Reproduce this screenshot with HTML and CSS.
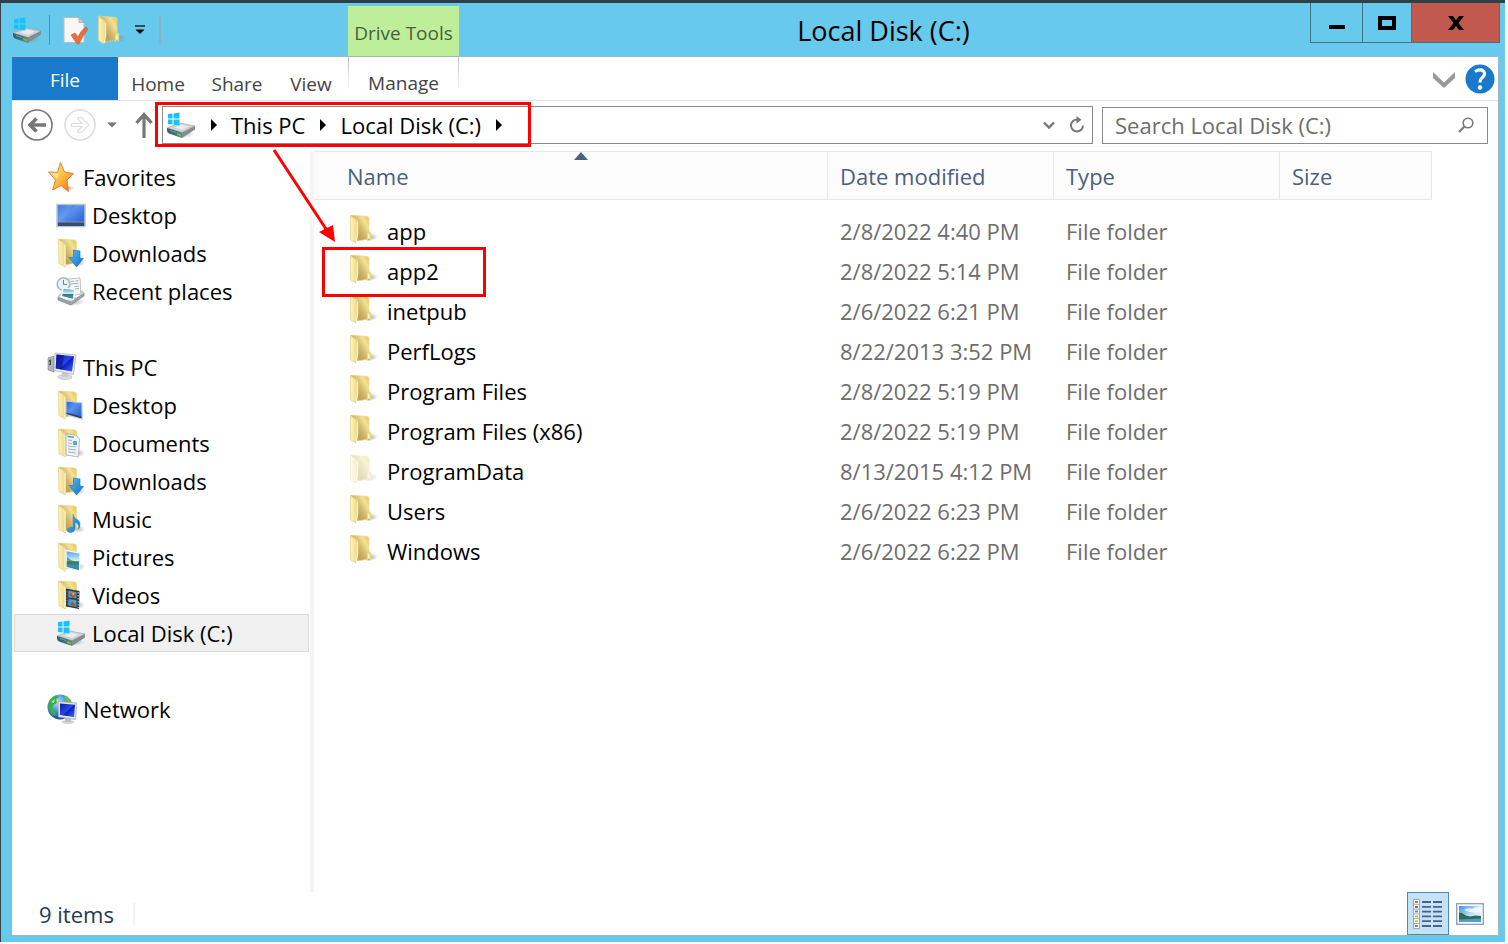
FILE: index.html
```html
<!DOCTYPE html>
<html lang="en">
<head>
<meta charset="utf-8">
<meta name="viewport" content="width=device-width, initial-scale=1">
<title>Local Disk (C:)</title>
<link rel="stylesheet" href="styles.css">
</head>
<body>
<svg class="defs" width="0" height="0" aria-hidden="true">
  <defs>
    <linearGradient id="gBack" gradientUnits="userSpaceOnUse" x1="8" y1="18" x2="21" y2="10"><stop offset="0" stop-color="#bfa35a"/><stop offset=".35" stop-color="#d3b96f"/><stop offset=".8" stop-color="#f3e296"/><stop offset="1" stop-color="#ecd26c"/></linearGradient>
    <linearGradient id="gFront" x1="0" y1="0" x2="1" y2="0"><stop offset="0" stop-color="#fdf3bd"/><stop offset="1" stop-color="#efd888"/></linearGradient>
    <linearGradient id="gStar" x1="0" y1="0" x2="1" y2="1"><stop offset="0" stop-color="#fff08a"/><stop offset=".55" stop-color="#fdb83c"/><stop offset="1" stop-color="#e8641c"/></linearGradient>
    <linearGradient id="gBlue" x1="0" y1="0" x2="1" y2="1"><stop offset="0" stop-color="#2a5fd0"/><stop offset=".4" stop-color="#5b92ee"/><stop offset="1" stop-color="#1d55cf"/></linearGradient>
    <linearGradient id="gScreen" x1="0" y1="0" x2="1" y2="1"><stop offset="0" stop-color="#0a18a8"/><stop offset=".5" stop-color="#2b49e4"/><stop offset=".55" stop-color="#0a1fc0"/><stop offset="1" stop-color="#3d6bf0"/></linearGradient>
    <linearGradient id="gArrow" x1="0" y1="0" x2="1" y2="1"><stop offset="0" stop-color="#55bdf2"/><stop offset="1" stop-color="#1371c4"/></linearGradient>
    <linearGradient id="gDisk" x1="0" y1="0" x2="1" y2="0"><stop offset="0" stop-color="#4d5560"/><stop offset=".5" stop-color="#3f6f78"/><stop offset="1" stop-color="#7a8288"/></linearGradient>
    <linearGradient id="gPhoto" x1="0" y1="0" x2="0" y2="1"><stop offset="0" stop-color="#4f9fe0"/><stop offset=".5" stop-color="#d4eefa"/><stop offset=".55" stop-color="#3f7d52"/><stop offset=".75" stop-color="#3c8fb4"/><stop offset="1" stop-color="#2d73b8"/></linearGradient>
    <linearGradient id="gSky" x1="0" y1="0" x2="1" y2="1"><stop offset="0" stop-color="#3c94e2"/><stop offset=".6" stop-color="#cfeafa"/><stop offset="1" stop-color="#eef8fd"/></linearGradient>
    <radialGradient id="gGlobe" cx=".4" cy=".3" r=".75"><stop offset="0" stop-color="#b8e4fb"/><stop offset=".5" stop-color="#3d8fda"/><stop offset="1" stop-color="#0f3f96"/></radialGradient>
    <radialGradient id="gShade"><stop offset="0" stop-color="#888" stop-opacity=".6"/><stop offset="1" stop-color="#888" stop-opacity="0"/></radialGradient>
  </defs>
  <symbol id="folder" viewBox="0 0 30 30">
    <ellipse cx="22" cy="23" rx="7" ry="4" fill="url(#gShade)"/>
    <path d="M2 1 L19 2.500 Q20 3 20 5 V25 L8 27Z" fill="url(#gBack)" stroke="#e9d58e" stroke-width=".6"/>
    <path d="M18 19.500 Q19 17.500 21 18 Q22 18.500 22 20 V26 L18 26.500Z" fill="#f2df84" stroke="#dfc663" stroke-width=".5"/>
    <path d="M19.800 20.500 V25" stroke="#fffbe0" stroke-width="1.200"/><path d="M19.800 24.500 V26" stroke="#7fb4cf" stroke-width="1.200"/>
    <path d="M1.500 1.500 L8 6 Q8.800 7 8.800 9 V20 L7 29 L2 26 Q1.500 25 1.500 24Z" fill="url(#gFront)" stroke="#e3cd80" stroke-width=".7"/>
    <path d="M8.600 8 V20 L7.300 28" stroke="#fffbe2" fill="none"/>
  </symbol>
  <symbol id="lib" viewBox="0 0 30 30">
    <ellipse cx="22" cy="25" rx="7" ry="4" fill="url(#gShade)"/>
    <path d="M3 1 L19 2 Q20.500 2.500 20.500 4 V25 L9 27Z" fill="url(#gBack)" stroke="#e9d58e" stroke-width=".6"/>
    <path d="M2.500 1.500 L8.500 5 Q9.500 6 9.500 8 V29 L3 25.500Z" fill="url(#gFront)" stroke="#e3cd80" stroke-width=".7"/>
    <path d="M9 7 V28" stroke="#fff8d6"/>
  </symbol>
  <symbol id="disk" viewBox="0 0 30 30">
    <ellipse cx="17" cy="24" rx="12" ry="4" fill="url(#gShade)"/>
    <path d="M1 18 L14 13 L29 16 L16 22.500Z" fill="#cfd2d5" stroke="#9da2a6" stroke-width=".6"/>
    <path d="M8 17.500 L15 14.500 L23 16.500 L16 20Z" fill="#e8eaec"/>
    <path d="M1 18 L16 22.500 V28 L3 23.500 Q1 22.500 1 20.500Z" fill="url(#gDisk)"/>
    <path d="M16 22.500 L29 16 V19.500 L16 28Z" fill="#858c91"/>
    <path d="M11 23 L15 24.300 V26.500 L11 25.100Z" fill="#5ac93c"/>
    <path d="M4 20.500 L10 22.500" stroke="#37b0d2"/>
    <path d="M2 4 L6.500 3.500 V8.500 H2Z M7.500 3.400 L13.500 2.500 V8.500 H7.500Z M2 9.500 H6.500 V14.500 L2 14Z M7.500 9.500 H13.500 V15.500 L7.500 14.700Z" fill="#19c3fa"/>
  </symbol>
  <symbol id="star" viewBox="0 0 30 30">
    <ellipse cx="21" cy="26" rx="7" ry="3" fill="url(#gShade)"/>
    <path d="M13.500 .5 L17.500 10 L26.500 11.500 L20 18 L21.500 29.500 L14 23.500 L5.500 28 L8.500 18 L1.500 10 L10.500 10.300Z" fill="url(#gStar)" stroke="#e2792c" stroke-width=".9" stroke-linejoin="round"/>
    <path d="M13.300 4 L11.500 11.500 L5 11.500 L10.500 17Z" fill="#fff7b5" opacity=".7"/>
  </symbol>
  <symbol id="desktop" viewBox="0 0 30 30">
    <rect x="1" y="4.500" width="28" height="22" fill="url(#gBlue)" stroke="#b9c4d2" stroke-width="1.500"/>
    <path d="M2 22 H28 V26 H2Z" fill="#3b4b68"/><path d="M2 22 H28" stroke="#8fa5c9" stroke-width=".8"/>
    <path d="M2 5.500 H16 L6 21.500 H2Z" fill="#7fa9f2" opacity=".35"/>
  </symbol>
  <symbol id="downloads" viewBox="0 0 30 30"><use href="#lib"/>
    <path d="M17.500 12 L24 13 V20 L27.500 20.500 L20.500 29 L13 19.500 L17.500 19.500Z" fill="url(#gArrow)" stroke="#1f7cc4" stroke-width=".7"/>
  </symbol>
  <symbol id="recent" viewBox="0 0 30 30">
    <ellipse cx="17" cy="26" rx="12" ry="4" fill="url(#gShade)"/>
    <path d="M12 3 L24 2 L25 18 L13 20Z" fill="#f7f9fa" stroke="#a9b3ba" stroke-width=".8"/>
    <path d="M14.500 5.500 L18 5.200 M19.500 5 L22.500 4.800 M14.500 8 L22.500 7.200 M18.500 10.500 L23 10 M19 13 L23 12.500" stroke="#8ba3b4" stroke-width=".9"/>
    <circle cx="7.500" cy="8" r="6.300" fill="#e7f0f4" stroke="#a9b7c0" stroke-width="1.600"/>
    <path d="M7.500 4 V8.500 H11" stroke="#6d8290" fill="none"/>
    <path d="M2 21 L15 26 L28 17 V20 L15 29 L2 24Z" fill="#9da4a9" stroke="#747c83" stroke-width=".6"/>
    <path d="M2 21 L7 16 M15 26 L20 21 M28 17 L24 15" stroke="#b9bfc4" stroke-width="1.500"/>
    <path d="M7 12 L18.500 13.500 L17.500 23.500 L5.500 20.500Z" fill="url(#gPhoto)" stroke="#fff" stroke-width="1.200"/>
  </symbol>
  <symbol id="pc" viewBox="0 0 30 30">
    <path d="M1 6 L7 4 V20 L1 18Z" fill="#aeb4b9" stroke="#7d858b" stroke-width=".6"/><path d="M2 8 L4 7.500 V13 L2 13Z" fill="#4a5157"/><path d="M2.300 10 V12" stroke="#62d848"/>
    <ellipse cx="18" cy="25" rx="7" ry="2.600" fill="#d9dcdf" stroke="#adb2b6" stroke-width=".6"/>
    <path d="M15 20 L21 21 V25 H15Z" fill="#c4c9cd"/>
    <path d="M8 1 L29 3 L26.500 22.500 L7 18.500Z" fill="#e6e9ec" stroke="#a9b0b6" stroke-width=".7"/>
    <path d="M9.500 2.500 L27 4.200 L25 19.500 L8.700 16.500Z" fill="url(#gScreen)"/>
    <path d="M9.500 2.500 L17 3.200 L15 17.600 L8.700 16.500Z" fill="#061088" opacity=".55"/>
  </symbol>
  <symbol id="deskfolder" viewBox="0 0 30 30"><use href="#lib"/>
    <path d="M10 11 L26 13 V29 L10 24.500Z" fill="url(#gBlue)" stroke="#c2ccd8" stroke-width="1.200"/><path d="M10.500 22.500 L25.500 26.500 V28.300 L10.500 24Z" fill="#34435c"/>
  </symbol>
  <symbol id="documents" viewBox="0 0 30 30"><use href="#lib"/>
    <path d="M10 6 L20 7 L23.500 11 L22.500 29 L10 27Z" fill="#f0f2f4" stroke="#a4acb4" stroke-width=".8"/>
    <path d="M11.500 8.500 L18 9.200" stroke="#3aa58c" stroke-width="1.300"/><path d="M12 12 L16 12.500 M12 15 L16 15.500 M12 18 L20 19 M12 21 L20 22 M12 24 L20 25" stroke="#a9b3c2"/><rect x="17" y="13" width="4" height="4" fill="#5fa6d6"/>
  </symbol>
  <symbol id="music" viewBox="0 0 30 30"><use href="#lib"/>
    <path d="M17 10 Q18 14 22 16 Q26 20 22.500 25 Q23.500 20 19 18 V25 Q18 29 13.500 28.500 Q9.500 27.500 12 24.500 Q14 22.500 17 23.500Z" fill="url(#gArrow)" stroke="#3388bf" stroke-width=".5"/>
  </symbol>
  <symbol id="pictures" viewBox="0 0 30 30"><use href="#lib"/>
    <path d="M10 8.500 L24 11 L23.500 29 L10 25.500Z" fill="url(#gPhoto)" stroke="#edf3f6" stroke-width="1.300"/>
    <path d="M11 15 L15 18 L20 20 L23 23 L11 22Z" fill="#3c7c5d" opacity=".7"/>
  </symbol>
  <symbol id="videos" viewBox="0 0 30 30"><use href="#lib"/>
    <path d="M10 8.500 L23.500 11 L23 29 L10 26.500Z" fill="#34373d"/>
    <path d="M12.300 10.500 L20.500 12 V18.500 L12.300 17.500Z M12.300 19 L20.500 20 V27 L12.300 25.500Z" fill="#489bd0"/>
    <path d="M13 15 Q16 10 20 15 L17 18 M14 25 Q16 19 20 26Z" fill="#b34b26"/><circle cx="17" cy="14" r="1.500" fill="#dfa33d"/>
    <path d="M11 11 V26" stroke="#7c8288" stroke-dasharray="1.500 1.500"/><path d="M22.200 12 V28" stroke="#d6d9db" stroke-dasharray="1.500 1.500"/>
  </symbol>
  <symbol id="network" viewBox="0 0 30 30">
    <circle cx="13" cy="13" r="12.500" fill="url(#gGlobe)"/>
    <path d="M2 8 Q4 3 9 1.500 L12 3 L9 5 L10 9 L6 11 L5 14 L9 18 L8 22 Q2 19 1 13Z" fill="#3dae3e"/><path d="M18 2 Q23 4 25 9 L20 8 L17 6Z" fill="#66bd52"/><path d="M4 8 L8 5 L7 9Z" fill="#b9e889"/>
    <ellipse cx="21" cy="28" rx="6.500" ry="2" fill="#d3d6d9"/><path d="M18 23 H24 V28 H18Z" fill="#b9bec3"/>
    <path d="M11 7.500 L30 9 L28.500 25.500 L11.500 23Z" fill="#dee2e6" stroke="#a0a7ae" stroke-width=".7"/><path d="M13 9.500 L28 10.700 L27 23 L13 21Z" fill="url(#gScreen)"/>
  </symbol>
  <symbol id="properties" viewBox="0 0 30 30">
    <path d="M4 2.500 H19 L24 7.500 V27.500 H4Z" fill="#f8f7f6" stroke="#b9bdc0"/><path d="M19 2.500 V7.500 H24Z" fill="#c9d0d5" stroke="#8e989f" stroke-width=".6"/>
    <path d="M11 20 L15 18 L18 22 Q21 15 26 12 L28 14 Q23 20 19 29 L17 29Z" fill="#e4713f" stroke="#c65b31" stroke-width=".6"/>
  </symbol>
</svg>

<div class="window">
  <header class="titlebar">
    <div class="quick">
      <svg class="icon"><use href="#disk"/></svg>
      <span class="sep dark"></span>
      <button class="plain properties" aria-label="Properties"><svg class="icon"><use href="#properties"/></svg></button>
      <button class="plain" aria-label="New folder"><svg class="icon"><use href="#folder"/></svg></button>
      <button class="plain customize" aria-label="Customize Quick Access Toolbar"><svg width="12" height="10" viewBox="0 0 12 10"><path d="M1 1 H11" stroke="#222" stroke-width="1.500"/><path d="M1.500 4.500 H10.500 L6 9Z" fill="#000"/></svg></button>
      <span class="sep"></span>
    </div>
    <div class="context">Drive Tools</div>
    <h1 class="title">Local Disk (C:)</h1>
    <div class="controls">
      <button class="ctl" aria-label="Minimize"><svg width="16" height="16"><path d="M0 12 H16" stroke="#000" stroke-width="4"/></svg></button>
      <button class="ctl max" aria-label="Maximize"><svg width="18" height="14"><rect x="2" y="2" width="14" height="10" fill="none" stroke="#000" stroke-width="4"/></svg></button>
      <button class="ctl close" aria-label="Close"><svg width="16" height="14" viewBox="0 0 16 14"><path d="M0 0 H5 L8 4 L11 0 H16 L10.500 7 L16 14 H11 L8 10 L5 14 H0 L5.500 7Z"/></svg></button>
    </div>
  </header>

  <main class="client">
    <nav class="ribbon" aria-label="Ribbon">
      <button class="tab file">File</button>
      <button class="tab home">Home</button>
      <button class="tab share">Share</button>
      <button class="tab view">View</button>
      <button class="tab manage">Manage</button>
      <button class="plain expand" aria-label="Expand the Ribbon"><svg width="22" height="18" viewBox="0 0 22 18"><path d="M0 1 L11 11.500 L22 1 V7 L11 17 L0 7Z" fill="#999"/></svg></button>
      <button class="plain help" aria-label="Help"><svg width="30" height="30" viewBox="0 0 30 30"><circle cx="15" cy="15" r="14.500" fill="#1979ca"/><path d="M10 7.500 Q15 4.500 18.500 7 Q21 10 18 13 Q15 15 15 18.500" fill="none" stroke="#fff" stroke-width="3"/><circle cx="15" cy="23.500" r="2.200" fill="#fff"/></svg></button>
    </nav>

    <div class="address-row">
      <button class="plain" aria-label="Back"><svg width="32" height="32" viewBox="0 0 32 32"><circle cx="16" cy="16" r="15" fill="none" stroke="#777" stroke-width="1.600"/><path d="M25 16 H10 M15.500 9.500 L9 16 L15.500 22.500" fill="none" stroke="#777" stroke-width="3.600"/></svg></button>
      <button class="plain forward" aria-label="Forward"><svg width="32" height="32" viewBox="0 0 32 32"><circle cx="16" cy="16" r="15" fill="none" stroke="#ddd" stroke-width="1.600"/><path d="M7.500 14.500 H18 L14 10 V8.500 H17.500 L25 16 L17.500 23.500 H14 V22 L18 17.500 H7.500Z" fill="none" stroke="#ddd" stroke-width="1.200"/></svg></button>
      <button class="plain recent" aria-label="Recent locations"><svg width="10" height="6"><path d="M0 .5 H10 L5 5.500Z" fill="#777"/></svg></button>
      <button class="plain up" aria-label="Up"><svg width="18" height="26" viewBox="0 0 18 26"><path d="M9 26 V3 M1.500 11 L9 2.500 L16.500 11" fill="none" stroke="#777" stroke-width="3.200"/></svg></button>
      <div class="address">
        <svg class="icon"><use href="#disk"/></svg>
        <svg width="6" height="12"><path d="M0 0 L6 6 L0 12Z"/></svg>
        <a class="crumb" href="#">This PC</a>
        <svg width="6" height="12"><path d="M0 0 L6 6 L0 12Z"/></svg>
        <a class="crumb" href="#">Local Disk (C:)</a>
        <svg width="6" height="12"><path d="M0 0 L6 6 L0 12Z"/></svg>
        <button class="plain history" aria-label="Previous locations"><svg width="12" height="9" viewBox="0 0 12 9"><path d="M1 1.500 L6 6.500 L11 1.500" fill="none" stroke="#777" stroke-width="2.400"/></svg></button>
        <button class="plain refresh" aria-label="Refresh"><svg width="16" height="18" viewBox="0 0 16 18"><path d="M8 3.500 A6 6 0 1 0 14 9.500" fill="none" stroke="#777" stroke-width="2"/><path d="M7.500 0 L12.500 3.800 L7.500 7.500Z" fill="#777"/></svg></button>
      </div>
      <div class="search">
        <input type="text" aria-label="Search Local Disk (C:)" placeholder="Search Local Disk (C:)">
        <svg width="16" height="16" viewBox="0 0 16 16"><circle cx="10" cy="6" r="4.800" fill="none" stroke="#777" stroke-width="1.600"/><path d="M6.500 9.500 L1 15" stroke="#777" stroke-width="2.200"/></svg>
      </div>
    </div>

    <div class="panes">
      <nav class="tree" aria-label="Navigation pane">
        <a class="node root" href="#"><svg class="icon"><use href="#star"/></svg>Favorites</a>
        <a class="node" href="#"><svg class="icon"><use href="#desktop"/></svg>Desktop</a>
        <a class="node" href="#"><svg class="icon"><use href="#downloads"/></svg>Downloads</a>
        <a class="node" href="#"><svg class="icon"><use href="#recent"/></svg>Recent places</a>
        <a class="node root group" href="#"><svg class="icon"><use href="#pc"/></svg>This PC</a>
        <a class="node" href="#"><svg class="icon"><use href="#deskfolder"/></svg>Desktop</a>
        <a class="node" href="#"><svg class="icon"><use href="#documents"/></svg>Documents</a>
        <a class="node" href="#"><svg class="icon"><use href="#downloads"/></svg>Downloads</a>
        <a class="node" href="#"><svg class="icon"><use href="#music"/></svg>Music</a>
        <a class="node" href="#"><svg class="icon"><use href="#pictures"/></svg>Pictures</a>
        <a class="node" href="#"><svg class="icon"><use href="#videos"/></svg>Videos</a>
        <a class="node selected" href="#"><svg class="icon"><use href="#disk"/></svg>Local Disk (C:)</a>
        <a class="node root group" href="#"><svg class="icon"><use href="#network"/></svg>Network</a>
      </nav>
      <section class="list">
        <table class="files">
          <colgroup><col class="c-name"><col class="c-date"><col class="c-type"><col class="c-size"></colgroup>
          <thead><tr><th class="sorted" aria-sort="ascending">Name<svg class="sort" width="14" height="8"><path d="M0 8 L7 0 L14 8Z" fill="#4c607a"/></svg></th><th>Date modified</th><th>Type</th><th>Size</th></tr></thead>
          <tbody>
            <tr><td><span class="name"><svg class="icon"><use href="#folder"/></svg>app</span></td><td>2/8/2022 4:40 PM</td><td>File folder</td><td></td></tr>
            <tr><td><span class="name"><svg class="icon"><use href="#folder"/></svg>app2</span></td><td>2/8/2022 5:14 PM</td><td>File folder</td><td></td></tr>
            <tr><td><span class="name"><svg class="icon"><use href="#folder"/></svg>inetpub</span></td><td>2/6/2022 6:21 PM</td><td>File folder</td><td></td></tr>
            <tr><td><span class="name"><svg class="icon"><use href="#folder"/></svg>PerfLogs</span></td><td>8/22/2013 3:52 PM</td><td>File folder</td><td></td></tr>
            <tr><td><span class="name"><svg class="icon"><use href="#folder"/></svg>Program Files</span></td><td>2/8/2022 5:19 PM</td><td>File folder</td><td></td></tr>
            <tr><td><span class="name"><svg class="icon"><use href="#folder"/></svg>Program Files (x86)</span></td><td>2/8/2022 5:19 PM</td><td>File folder</td><td></td></tr>
            <tr><td><span class="name"><svg class="icon faded"><use href="#folder"/></svg>ProgramData</span></td><td>8/13/2015 4:12 PM</td><td>File folder</td><td></td></tr>
            <tr><td><span class="name"><svg class="icon"><use href="#folder"/></svg>Users</span></td><td>2/6/2022 6:23 PM</td><td>File folder</td><td></td></tr>
            <tr><td><span class="name"><svg class="icon"><use href="#folder"/></svg>Windows</span></td><td>2/6/2022 6:22 PM</td><td>File folder</td><td></td></tr>
          </tbody>
        </table>
      </section>
    </div>

    <footer class="status">
      <span class="count">9 items</span>
      <div class="views">
        <button class="view-btn active" aria-label="Details view"><svg width="30" height="30" viewBox="0 0 30 30">
          <path d="M.5 .5 H6.500 V29.500 H.5Z M.5 5.300 H6.500 M.5 10.100 H6.500 M.5 14.900 H6.500 M.5 19.700 H6.500 M.5 24.500 H6.500" fill="#fff" stroke="#98a2aa" stroke-width=".9"/>
          <path d="M2 2 H5 V4 H2Z M2 26 H5 V28 H2Z" fill="#6f9a74"/><path d="M2 7 H5 V9 H2Z" fill="#e2413c"/><path d="M2 11.500 H5 V13.500 H2Z" fill="#4a8fe4"/><path d="M2 16.500 H5 V18.500 H2Z" fill="#9fd03a"/><path d="M2 21 H5 V23 H2Z" fill="#e7d52f"/>
          <path d="M9 3 H18 M20 3 H29 M9 7.800 H18 M20 7.800 H29 M9 12.600 H18 M20 12.600 H29 M9 17.400 H18 M20 17.400 H29 M9 22.200 H18 M20 22.200 H29 M9 27 H18 M20 27 H29" stroke="#4a618d" stroke-width="1.800"/></svg></button>
        <button class="view-btn" aria-label="Large icons view"><svg width="28" height="22" viewBox="0 0 28 22"><rect x=".7" y=".7" width="26.600" height="20.600" fill="#fff" stroke="#8f9cb8" stroke-width="1.300"/><rect x="3" y="3" width="22" height="16" fill="url(#gSky)"/><path d="M3 15 H25 V19 H3Z" fill="#4a9fd0"/><path d="M3 9.500 L6 10 L10 12.500 L14 13.500 L19 12.500 L25 13 V15.500 L3 16.500Z" fill="#2f6c50"/><path d="M8 7 Q12 4 16 6 Q20 3 25 4 V9 Q16 11 8 7Z" fill="#fff" opacity=".75"/></svg></button>
      </div>
    </footer>
  </main>

  <svg class="marks" width="600" height="310" aria-hidden="true">
    <rect x="156.500" y="103.500" width="373" height="42" fill="none" stroke="#f00" stroke-width="3"/>
    <rect x="323.500" y="248.500" width="161" height="47" fill="none" stroke="#f00" stroke-width="3"/>
    <path d="M274 150 L328 232" stroke="#f00" stroke-width="3"/>
    <path d="M335 242 L319 232 L333 225Z" fill="#f00"/>
  </svg>
</div>
</body>
</html>
```

FILE: styles.css
```css
* { box-sizing: border-box; }
html, body { height: 100%; }
body {
  margin: 0;
  padding: 0 3px 2px 0;
  background: #fff;
  color: #000;
  font: 22px/30px "Open Sans", "Noto Sans", sans-serif;
}
button, input { font: inherit; color: inherit; }
a { color: inherit; text-decoration: none; }
svg { display: block; flex: none; }
.defs { position: absolute; }
.icon { width: 30px; height: 30px; }
.faded { opacity: .4; }
.plain { display: flex; padding: 0; border: 0; background: none; }

.window {
  position: relative;
  display: flex;
  flex-direction: column;
  height: 100%;
  padding: 0 5px 6px 11px;
  border-top: 3px solid #303f45;
  border-left: 1px solid #34404a;
  background: #67c9eb;
}

.titlebar { display: flex; height: 53px; }
.quick { display: flex; align-items: center; width: 336px; height: 54px; gap: 7px; }
.quick .sep { width: 2px; height: 30px; background: #8fb3c4; }
.quick .sep.dark { background: #5d8ca1; width: 1px; }
.properties { margin-left: 3px; }
.customize { padding-right: 6px; }
.context {
  width: 111px;
  height: 54px;
  margin-top: 3px;
  padding-top: 12px;
  background: #bfee9b;
  color: #48613c;
  font-size: 19px;
  text-align: center;
}
.title { flex: 1; margin: 0; padding-right: 2px; font-size: 27px; font-weight: 400; line-height: 56px; text-align: center; }
.controls { display: flex; height: 40px; border: 1px solid #3f7385; border-top: 0; }
.ctl { display: flex; align-items: center; justify-content: center; width: 51px; padding: 0; border: 0; background: none; }
.ctl.max { width: 50px; border-left: 1px solid #3f7385; border-right: 1px solid #3f7385; }
.ctl.close { width: 87px; background: #c1594f; }

.client { display: flex; flex: 1; flex-direction: column; min-height: 0; margin-right: 1px; border: 1px solid #9bb9c6; border-width: 1px 1px 1px 0; background: #fff; }

.ribbon { display: flex; align-items: flex-start; height: 44px; border-bottom: 1px solid #e3e3e3; }
.tab { height: 43px; padding: 11px 0 0; border: 0; background: none; color: #444; font-size: 19px; line-height: 30px; text-align: center; }
.file { width: 106px; padding: 2px 0 0; background: #1979ca; color: #fff; }
.home { width: 80px; }
.share { width: 78px; }
.view { width: 70px; }
.manage {
  width: 111px;
  height: 33px;
  margin-left: 2px;
  border: 1px solid;
  border-width: 0 1px;
  border-image: linear-gradient(#bbb, #fff) 1;
}
.expand { margin: 14px 10px 0 auto; }
.help { margin: 7px 3px 0 0; }

.address-row { display: flex; align-items: center; height: 50px; padding: 0 10px 2px 9px; }
.forward { margin-left: 11px; }
.recent { margin-left: 11px; }
.up { margin-left: 18px; }
.address {
  display: flex;
  flex: 1;
  align-items: center;
  height: 38px;
  margin: 0 9px 0 9px;
  padding: 0 7px 0 3px;
  border: 1px solid #8a8a8a;
}
.crumb { margin: 0 15px 0 14px; }
.address .icon { margin-right: 15px; }
.history { margin: 0 14px 0 auto; }
.search { display: flex; align-items: center; width: 386px; height: 37px; padding: 0 13px 0 12px; border: 1px solid #8a8a8a; }
.search input { flex: 1; min-width: 0; padding: 0; border: 0; outline: 0; background: none; }
.search input::placeholder { color: #6d6d6d; opacity: 1; }

.panes { display: flex; flex: 1; min-height: 0; }
.tree { width: 298px; padding: 7px 1px 0 2px; }
.node { display: flex; align-items: center; gap: 6px; height: 38px; padding-left: 41px; border: 1px solid transparent; }
.node.root { padding-left: 32px; }
.node.group { margin-top: 38px; }
.node.selected { border-color: #dadada; background: #f0f0f0; }
.list { flex: 1; min-width: 0; border-left: 4px solid #f5f5f5; }
.files { width: 1118px; border-collapse: separate; border-spacing: 0; table-layout: fixed; }
.c-name { width: 514px; }
.c-date, .c-type { width: 226px; }
.files th {
  height: 49px;
  padding: 0 0 0 12px;
  border: 1px solid #e8e8e8;
  border-left: 0;
  background: #fcfcfc;
  color: #4c607a;
  font-weight: 400;
  text-align: left;
}
.files th:first-child { padding-left: 33px; }
.sorted { position: relative; }
.sort { position: absolute; top: 0; left: 260px; }
.files td { height: 40px; padding: 0 0 0 12px; color: #6d6d6d; }
.files td:first-child { padding-left: 35px; color: #000; }
.files tbody::before { display: block; height: 11px; content: ""; }
.name { display: flex; align-items: center; gap: 8px; }
.name .icon { margin-bottom: 4px; }

.status { display: flex; align-items: center; justify-content: space-between; height: 43px; padding-left: 27px; color: #1e395b; }
.count { padding-right: 19px; border-right: 2px solid #f3f3f3; line-height: 22px; }
.views { display: flex; align-items: stretch; height: 43px; padding-right: 7px; }
.view-btn { display: flex; align-items: center; justify-content: center; width: 42px; padding: 0; border: 1px solid transparent; background: none; }
.view-btn.active { border: 1px solid #4f8ab0; background: #c3e2f5; }

.marks { position: absolute; top: -3px; left: -1px; pointer-events: none; }
```
